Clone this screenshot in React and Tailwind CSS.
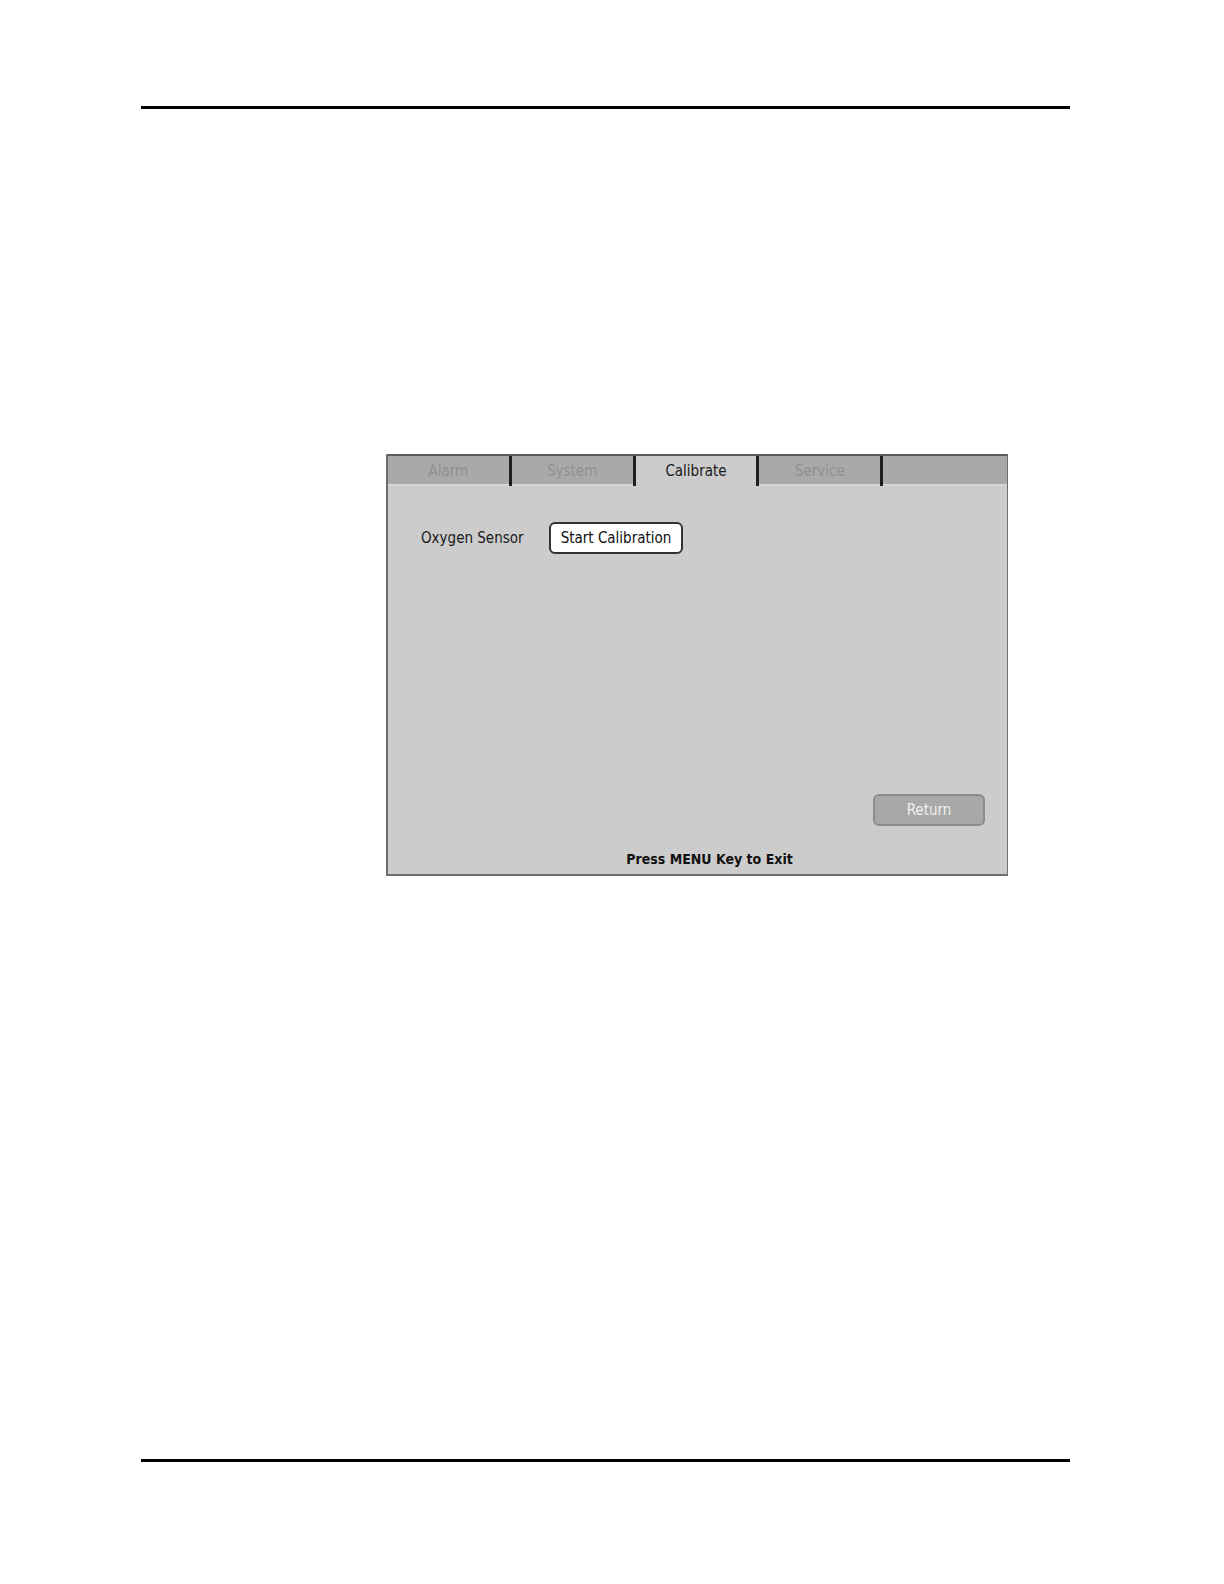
export default function App() {
  const font = { fontFamily: '"Liberation Sans Narrow", "DejaVu Sans Condensed", "Liberation Sans", sans-serif' };
  const tabs = ["Alarm", "System", "Calibrate", "Service", ""];
  return (
    <div className="w-[1224px] h-[1584px] bg-white relative flex flex-col" style={font}>
      <div className="ml-[141px] mt-[106px] w-[929px] h-[3px] bg-black" />
      <div className="ml-[386px] mt-[345px] w-[622px] h-[422px] flex flex-col bg-[#cccccc] border-l-2 border-b-2 border-r border-[#6e6e6e]">
        <div className="flex h-[32px] border-t-2 border-[#5a5a5a]">
          {tabs.map((t, i) => {
            const active = t === "Calibrate";
            return (
              <div key={i} className="flex flex-1">
                <div
                  className={
                    active
                      ? "flex-1 flex items-start justify-center pt-[4px] bg-[#cccccc] text-[15px] text-[#1a1a1a]"
                      : "flex-1 flex items-start justify-center pt-[4px] bg-[#a9a9a9] border-b-2 border-[#d6d6d6] text-[15px] text-[#909090]"
                  }
                >
                  {t}
                </div>
                {i < 4 && <div className="w-[3px] bg-[#1e1e1e]" />}
              </div>
            );
          })}
        </div>
        <div className="flex items-center mt-[36px] ml-[33px]">
          <span className="text-[15px] text-[#1a1a1a] w-[128px]">Oxygen Sensor</span>
          <div className="h-[32px] w-[134px] flex items-center justify-center bg-white border-2 border-[#333] rounded-[6px] text-[15px] text-[#111]">
            Start Calibration
          </div>
        </div>
        <div className="flex-1" />
        <div className="flex justify-end mr-[22px]">
          <div className="h-[32px] w-[112px] flex items-center justify-center bg-[#a8a8a8] border-2 border-[#8c8c8c] rounded-[6px] text-[15px] text-[#f0f0f0]">
            Return
          </div>
        </div>
        <div className="flex justify-center mt-[23px] mb-[4px] pl-[24px]">
          <span className="text-[14px] font-bold text-[#111]">Press MENU Key to Exit</span>
        </div>
      </div>
      <div className="ml-[141px] mt-[583px] w-[929px] h-[3px] bg-black" />
    </div>
  );
}
